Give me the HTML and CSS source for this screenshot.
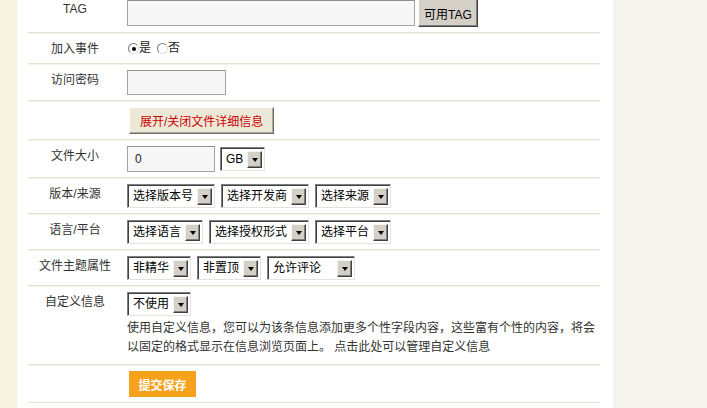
FILE: index.html
```html
<!DOCTYPE html>
<html lang="zh-CN">
<head>
<meta charset="utf-8">
<title>文件发布</title>
<link rel="stylesheet" href="styles.css">
</head>
<body>
<div class="page">
  <div class="strip"></div>
  <div class="panel">
    <div class="form">
      <div class="row">
        <div class="label">TAG</div>
        <div class="field">
          <input class="txt w-tag" type="text">
          <button class="btn-gray">可用TAG</button>
        </div>
      </div>
      <div class="row">
        <div class="label">加入事件</div>
        <div class="field radios">
          <span class="radio on"></span><span class="rtext">是</span>
          <span class="radio"></span><span class="rtext">否</span>
        </div>
      </div>
      <div class="row">
        <div class="label">访问密码</div>
        <div class="field">
          <input class="txt w-pass" type="text">
        </div>
      </div>
      <div class="row">
        <div class="label"></div>
        <div class="field">
          <button class="btn-toggle">展开/关闭文件详细信息</button>
        </div>
      </div>
      <div class="row">
        <div class="label">文件大小</div>
        <div class="field">
          <input class="txt w-size" type="text" value="0">
          <span class="sel"><span class="opt">GB</span><span class="arrow"></span></span>
        </div>
      </div>
      <div class="row">
        <div class="label">版本/来源</div>
        <div class="field">
          <span class="sel"><span class="opt">选择版本号</span><span class="arrow"></span></span>
          <span class="sel"><span class="opt">选择开发商</span><span class="arrow"></span></span>
          <span class="sel"><span class="opt">选择来源</span><span class="arrow"></span></span>
        </div>
      </div>
      <div class="row">
        <div class="label">语言/平台</div>
        <div class="field">
          <span class="sel"><span class="opt">选择语言</span><span class="arrow"></span></span>
          <span class="sel"><span class="opt">选择授权形式</span><span class="arrow"></span></span>
          <span class="sel"><span class="opt">选择平台</span><span class="arrow"></span></span>
        </div>
      </div>
      <div class="row">
        <div class="label">文件主题属性</div>
        <div class="field">
          <span class="sel"><span class="opt">非精华</span><span class="arrow"></span></span>
          <span class="sel"><span class="opt">非置顶</span><span class="arrow"></span></span>
          <span class="sel wide"><span class="opt">允许评论</span><span class="arrow"></span></span>
        </div>
      </div>
      <div class="row">
        <div class="label">自定义信息</div>
        <div class="field column">
          <div><span class="sel"><span class="opt">不使用</span><span class="arrow"></span></span></div>
          <p class="note">使用自定义信息，您可以为该条信息添加更多个性字段内容，这些富有个性的内容，将会以固定的格式显示在信息浏览页面上。 点击此处可以管理自定义信息</p>
        </div>
      </div>
      <div class="row">
        <div class="label"></div>
        <div class="field">
          <button class="btn-submit">提交保存</button>
        </div>
      </div>
    </div>
  </div>
</div>
</body>
</html>
```
FILE: styles.css
```css
html, body {
  margin: 0;
  padding: 0;
  height: 100%;
  background: #f5f4ef;
  font-family: "Liberation Sans", "Noto Sans CJK SC", sans-serif;
  font-size: 12px;
  color: #333;
  overflow: hidden;
}

.page {
  display: flex;
  height: 100%;
}

.strip {
  width: 17px;
  flex: none;
  background: #f6f3e3;
}

.panel {
  width: 596px;
  flex: none;
  background: #fff;
}

.form {
  margin: -6px 13px 0 11px;
}

.row {
  display: flex;
  border-bottom: 1px solid #e4e2d3;
}

.row + .row {
  border-top: 1px solid #f4f3ea;
}

.label {
  width: 94px;
  flex: none;
  text-align: center;
  padding-top: 5px;
  line-height: 20px;
  color: #333;
}

.field {
  flex: 1;
  padding: 5px;
  display: flex;
  align-items: center;
  gap: 6px;
}

.field.column {
  flex-direction: column;
  align-items: flex-start;
  gap: 0;
}

.txt {
  box-sizing: border-box;
  height: 26px;
  margin: 0;
  border: 1px solid #a3a3a3;
  border-top-color: #8e8e8e;
  background: #f7f7f7;
  padding: 0 7px;
  font: inherit;
  color: #222;
  outline: none;
}

.w-tag { width: 288px; }
.w-pass { width: 99px; height: 25px; }
.w-size { width: 88px; margin-right: -1px; }

.btn-gray {
  box-sizing: border-box;
  height: 28px;
  margin: 0 0 0 -3px;
  padding: 0 5px;
  background: #d4d0c8;
  border: 1px solid;
  border-color: #fff #404040 #404040 #fff;
  box-shadow: inset -1px -1px 0 #808080;
  font: inherit;
  color: #000;
}

.radios {
  height: 19px;
  gap: 0;
  padding-left: 6px;
}

.radio {
  box-sizing: border-box;
  width: 11px;
  height: 11px;
  border-radius: 50%;
  border: 1px solid;
  border-color: #7a7a7a #dcdcdc #dcdcdc #7a7a7a;
  background: #fff;
  display: flex;
  align-items: center;
  justify-content: center;
}

.radio.on::after {
  content: "";
  width: 4px;
  height: 4px;
  border-radius: 50%;
  background: #000;
}

.rtext {
  line-height: 19px;
  margin-right: 6px;
  color: #222;
}

.btn-toggle {
  box-sizing: border-box;
  height: 27px;
  margin: 0 0 0 2px;
  padding: 0 10px;
  background: #ece9d8;
  border: 1px solid;
  border-color: #fff #716f64 #716f64 #fff;
  box-shadow: inset -1px -1px 0 #aca899;
  font: inherit;
  color: #cc0000;
}

.sel {
  box-sizing: border-box;
  display: inline-flex;
  align-items: center;
  height: 24px;
  border: 1px solid;
  border-color: #7f7f7f #e4e2da #e4e2da #7f7f7f;
  box-shadow: inset 1px 1px 0 #404040;
  background: #fff;
  padding: 0 2px 0 5px;
  color: #000;
  white-space: nowrap;
}

.sel.wide {
  width: 88px;
  justify-content: space-between;
}

.opt {
  line-height: 20px;
}

.arrow {
  box-sizing: border-box;
  width: 15px;
  height: 17px;
  margin-left: 4px;
  background: #d4d0c8;
  border: 1px solid;
  border-color: #f4f3ee #404040 #404040 #f4f3ee;
  box-shadow: inset -1px -1px 0 #808080;
  display: flex;
  align-items: center;
  justify-content: center;
}

.arrow::after {
  content: "";
  width: 0;
  height: 0;
  border-left: 3.5px solid transparent;
  border-right: 3.5px solid transparent;
  border-top: 4px solid #000;
  margin-top: 1px;
}

.note {
  margin: 3px 0 2px;
  line-height: 19px;
  color: #333;
}

.btn-submit {
  box-sizing: border-box;
  width: 67px;
  height: 26px;
  margin: 0 0 0 2px;
  padding: 0;
  background: #f6a21d;
  border: none;
  font: inherit;
  font-weight: bold;
  color: #fff;
}
```
